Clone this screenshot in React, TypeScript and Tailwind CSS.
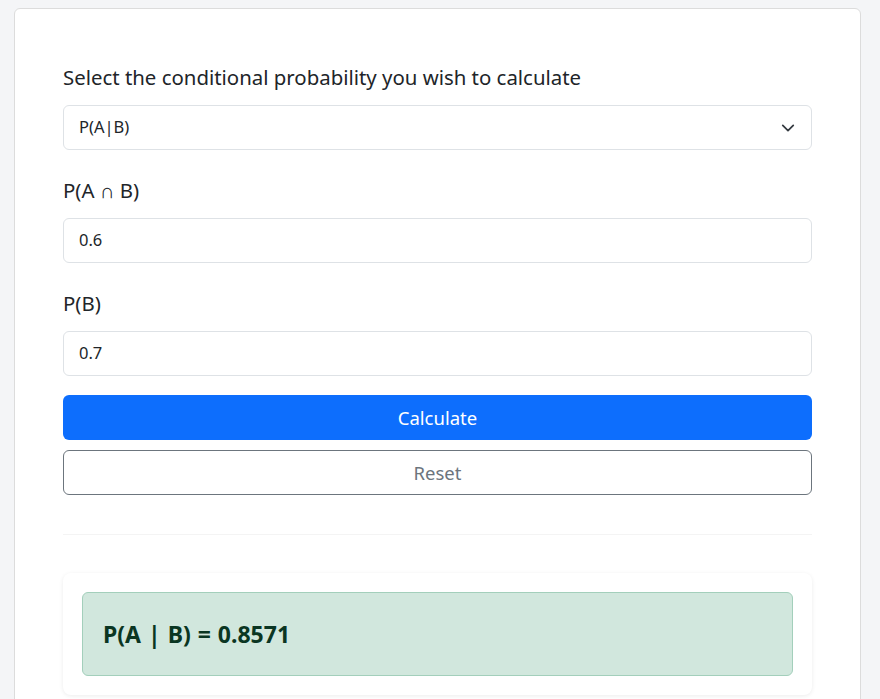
import React from "react";

export default function App() {
  return (
    <div className="min-h-[699px] bg-[#f4f5f7] pt-[8px] pl-[14px] pr-[19px] overflow-hidden" style={{ fontFamily: '"Noto Sans", "Open Sans", sans-serif' }}>
      <div className="bg-white border border-[#dcdcdc] rounded-[6px] px-[48px] pt-[54px] pb-[40px] text-[#212529]">
        <div className="text-[20.4px] leading-[28px] mb-[14px]">Select the conditional probability you wish to calculate</div>
        <div className="h-[45px] border border-[#dee2e6] rounded-[6px] flex items-center justify-between pl-[15px] pr-[16px] text-[16.5px]">
          <span>P(A|B)</span>
          <svg width="14" height="14" viewBox="0 0 16 16" fill="none" stroke="#343a40" strokeWidth="2" strokeLinecap="round" strokeLinejoin="round"><path d="M2 5l6 6 6-6" /></svg>
        </div>
        <div className="text-[20.4px] leading-[28px] mt-[26px] mb-[14px]">P(A ∩ B)</div>
        <div className="h-[45px] border border-[#dee2e6] rounded-[6px] flex items-center pl-[15px] text-[16.5px]">0.6</div>
        <div className="text-[20.4px] leading-[28px] mt-[26px] mb-[14px]">P(B)</div>
        <div className="h-[45px] border border-[#dee2e6] rounded-[6px] flex items-center pl-[15px] text-[16.5px]">0.7</div>
        <button className="mt-[19px] w-full h-[45px] rounded-[6px] bg-[#0d6efd] text-white text-[18.5px] flex items-center justify-center">Calculate</button>
        <button className="mt-[10px] w-full h-[45px] rounded-[6px] border border-[#6c757d] text-[#6c757d] text-[18.5px] flex items-center justify-center">Reset</button>
        <div className="mt-[39px] h-px bg-[#f4f4f4]"></div>
        <div className="mt-[38px] rounded-[8px] bg-white shadow-[0_1px_4px_rgba(0,0,0,0.08)] p-[19px]">
          <div className="h-[84px] rounded-[6px] bg-[#d1e7dd] border border-[#a3cfbb] flex items-center pl-[20px] text-[#0a3622] text-[23px] font-bold" style={{ wordSpacing: "1px" }}>P(A | B) = 0.8571</div>
        </div>
      </div>
    </div>
  );
}
